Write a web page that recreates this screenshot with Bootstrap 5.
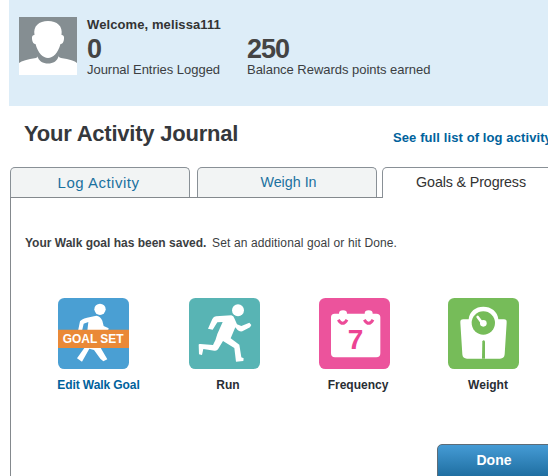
<!DOCTYPE html>
<html lang="en">
<head>
<meta charset="utf-8">
<meta name="viewport" content="width=device-width, initial-scale=1">
<title>Your Activity Journal</title>
<link href="https://cdn.jsdelivr.net/npm/bootstrap@5.3.0/dist/css/bootstrap.min.css" rel="stylesheet">
<style>
body{font-family:"Liberation Sans",Arial,sans-serif;font-size:13px;line-height:16px;color:#3b3e42;background:#fff;width:548px;height:476px;overflow:hidden}
a{color:#00629c;text-decoration:none}
.welcome{background:#ddedf8;height:106px;margin-left:9px;padding:17px 0 0 10px}
.avatar{width:58px;height:58px;margin-right:10px}
.stat-col{width:160px}
.stat-name{color:#333;letter-spacing:.1px}
.stat-num{font-size:27px;line-height:28px;font-weight:700;color:#444;letter-spacing:-1px;margin-top:2px}
.stat-label{letter-spacing:-.03px;margin-top:-1px}
.page-head{height:61px;padding:15px 0 0 24px}
.page-title{font-size:22px;line-height:26px;font-weight:700;color:#35383c;margin:0;letter-spacing:-.22px;width:369px}
.full-link{font-weight:700;letter-spacing:.1px;margin-top:9px}
.journal-tabs{height:31px;margin-left:10px;padding:0;border-bottom:1px solid #84898d;gap:7px}
.journal-tabs .nav-link{height:30px;border:1px solid #899096;border-bottom:0;border-radius:5px 5px 0 0;background:#f2f4f4;color:#1b719f;font-size:15px;line-height:29px;padding:0;text-align:center;width:180px;margin:0;letter-spacing:0}
.journal-tabs .log-tab{padding-right:3px;letter-spacing:.5px}
.journal-tabs .weigh-tab{font-size:14.3px;padding-left:3px}
.journal-tabs .nav-link.active{height:31px;background:#fff;color:#333;font-size:14.3px;width:180px;margin-left:-2px;padding-right:2px;letter-spacing:-.14px}
.panel{margin-left:10px;height:278px;border-left:1px solid #84898d;padding-top:37px}
.message{font-size:12px;line-height:16px;padding-left:14px;margin:0;height:63px}
.message-next{letter-spacing:.12px;margin-left:-1px}
.goals{padding-left:47px}
.goal{width:130px;font-size:12px;font-weight:700;line-height:16px;color:#292e34}
.goal span{width:120px;margin-left:-19.500px;padding-top:8px;padding-right:10px;text-align:center;display:block}
.goal span{width:71px;margin-left:4.500px;padding-right:0;margin-right:0}
.goal .walk-label{width:91px;margin-left:-5px;letter-spacing:-.08px}
.goal svg{width:71px;height:71px;display:block}
.goal.shift svg{margin-left:.5px}
.done-btn{margin:51px -20px 0 0;width:131px;height:40px;border:1px solid #5d6c77;border-radius:5px;background:linear-gradient(#459bd5,#176596);color:#fff;font-size:14px;font-weight:700;line-height:16px;padding:0 17px 8px 0}
</style>
<script src="https://cdn.jsdelivr.net/npm/bootstrap@5.3.0/dist/js/bootstrap.bundle.min.js"></script>
</head>
<body>
<header class="welcome d-flex">
  <svg class="avatar flex-shrink-0" viewBox="0 0 58 58" aria-hidden="true">
    <path fill="#858e92" d="M0 0h58v58H0z"/>
    <path fill="#fff" d="M0 58V46Q4 43 17 41Q20 40 19 36H39Q38 40 42 41Q55 43 58 46V58z"/>
    <path fill="#858e92" d="M18.500 39C20 49 38 49 39.500 39V34h-21z"/>
    <path fill="#fff" d="M15.500 18C14 9 20 4 29 4s15 5 13.500 14q3 0 2.500 4-.5 5-3.500 5C39 36 34 41 29 41S19 36 16.500 27Q13.500 27 13 22q-.5-4 2.500-4z"/>
  </svg>
  <div class="stat-col">
    <div class="stat-name fw-bold">Welcome, melissa111</div>
    <div class="stat-num">0</div>
    <div class="stat-label">Journal Entries Logged</div>
  </div>
  <div class="pt-3">
    <div class="stat-num">250</div>
    <div class="stat-label text-nowrap">Balance Rewards points earned</div>
  </div>
</header>
<div class="page-head d-flex">
  <h1 class="page-title flex-shrink-0">Your Activity Journal</h1>
  <a class="full-link text-nowrap" href="#">See full list of log activity</a>
</div>
<ul class="nav journal-tabs flex-nowrap">
  <li class="nav-item"><a class="nav-link log-tab" href="#">Log Activity</a></li>
  <li class="nav-item"><a class="nav-link weigh-tab" href="#">Weigh In</a></li>
  <li class="nav-item"><a class="nav-link active" href="#">Goals &amp; Progress</a></li>
</ul>
<main class="panel">
  <p class="message"><strong>Your Walk goal has been saved.</strong>&nbsp; <span class="message-next">Set an additional goal or hit Done.</span></p>
  <div class="goals d-flex">
    <div class="goal flex-shrink-0">
      <svg viewBox="24 24 213 213">
        <rect x="24" y="24" width="213" height="213" rx="19" fill="#4a9fd3"/>
        <circle cx="150" cy="58" r="17" fill="#fff"/>
        <path fill="#fff" d="M111 83L139 77Q151 78 157 92L161 108 176 115 174 123H153L150 170 172 208 160 214 151 206 132 180 118 176 96 215 81 205 103 174 112 122 115 96 101 101 96 123H84L90 94Q93 88 111 83z"/>
        <path d="M24 119h213v55H24z" fill="#ea8937"/>
        <text x="38" y="159" textLength="183" lengthAdjust="spacingAndGlyphs" font-size="37" font-weight="700" fill="#fff">GOAL SET</text>
      </svg>
      <span class="walk-label"><a href="#">Edit Walk Goal</a></span>
    </div>
    <div class="goal shift flex-shrink-0">
      <svg viewBox="24 24 213 213">
        <rect x="24" y="24" width="213" height="213" rx="19" fill="#58b4b4"/>
        <circle cx="171" cy="61" r="18" fill="#fff"/>
        <path fill="#fff" d="M105 79L151 76Q158 78 160 85L168 103 181 108 205 98 211 105 207 112 184 124Q175 126 169 119L163 112 149 145 175 164 181 202 188 205 187 213 165 215 160 174 126 153 111 178Q108 183 100 182L67 177 63 195 54 193 53 164Q53 161 58 162L96 165Q105 149 109 132L125 96 109 97 95 119 81 116 94 87Q98 80 105 79z"/>
      </svg>
      <span>Run</span>
    </div>
    <div class="goal shift flex-shrink-0">
      <svg viewBox="24 24 213 213">
        <rect x="24" y="24" width="213" height="213" rx="19" fill="#ec539c"/>
        <path fill="#fff" d="M71 71H84Q84 61 96 61T108 71H161Q161 61 173 61T185 71H196Q208 71 208 82V190Q208 202 196 202H72Q60 202 60 190V82Q60 71 71 71z"/>
        <path d="M82 89Q95 111 108 89M160 89Q173 111 186 89" fill="none" stroke="#ec4b98" stroke-width="9"/>
        <text x="110" y="177" font-size="84" font-weight="700" fill="#ec4393">7</text>
      </svg>
      <span>Frequency</span>
    </div>
    <div class="goal flex-shrink-0">
      <svg viewBox="24 24 213 213">
        <rect x="24" y="24" width="213" height="213" rx="19" fill="#76bc59"/>
        <path fill="#fff" d="M70 88H86C88 64 107 50 130 50s43 14 45 38H192Q201 88 200 98L194 193Q193 206 180 206H81Q68 206 67 193L61 98Q60 88 70 88z"/>
        <circle cx="130" cy="99" r="35" fill="#76bc59"/>
        <path d="M126 206L127 154Q131 147 135 154V206z" fill="#76bc59"/>
        <circle cx="130" cy="100" r="10" fill="#fff"/>
        <path d="M113 81L128 101" stroke="#fff" stroke-width="8" stroke-linecap="round"/>
      </svg>
      <span>Weight</span>
    </div>
  </div>
  <div class="d-flex justify-content-end"><button class="btn done-btn flex-shrink-0" type="button">Done</button></div>
</main>
</body>
</html>
